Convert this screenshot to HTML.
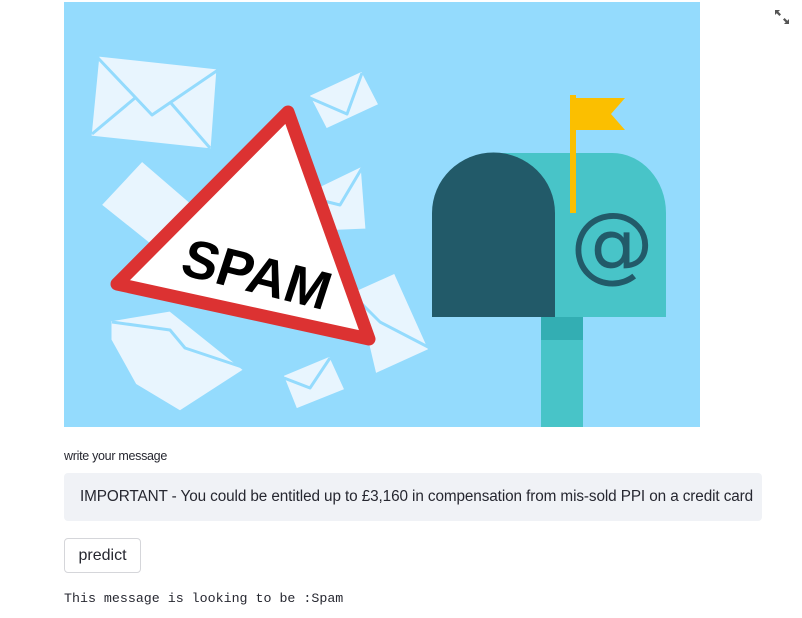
<!DOCTYPE html>
<html><head><meta charset="utf-8"><style>
body{margin:0;width:802px;height:618px;background:#fff;position:relative;overflow:hidden;font-family:"Liberation Sans",sans-serif;color:#262730}
svg.main{position:absolute;left:64px;top:2px}
.lbl{position:absolute;left:64px;top:449px;font-size:12.5px;color:#262730;letter-spacing:-0.3px}
.inp{position:absolute;left:64px;top:473px;width:698px;height:48px;background:#f0f2f6;border-radius:4px;overflow:hidden;white-space:nowrap;font-size:15.3px;line-height:48px;text-indent:16px;color:#262730;letter-spacing:-0.1px}
.btn{position:absolute;left:64px;top:538px;width:77px;height:35px;border:1px solid #d5d6da;border-radius:4px;font-size:16px;line-height:34px;text-align:center;box-sizing:border-box}
.out{position:absolute;left:64px;top:591px;font-family:"Liberation Mono",monospace;font-size:13.3px;color:#262730}
</style></head><body>
<svg class="main" width="636" height="425" viewBox="64 2 636 425">
<rect x="64" y="2" width="636" height="425" fill="#94dbfd"/>
<g fill="#e8f5fe" stroke="#94dbfd" stroke-width="3" stroke-linejoin="round">
<polygon points="98,55 218,68 212,150 90,137"/>
<polyline points="98,58 152,115 218,70" fill="none"/>
<polyline points="92,134 135,98" fill="none"/><polyline points="170,102 210,148" fill="none"/>
<polygon points="308,95 362,70 380,105 326,130"/>
<polyline points="310,98 347,114 362,73" fill="none"/>
<polygon points="100,205 142,160 200,210 150,245"/>
<polygon points="300,195 362,165 367,230 320,232"/>
<polyline points="320,200 340,205 362,168" fill="none"/>
<polygon points="110,320 170,310 245,370 180,412 135,385 110,340"/>
<polyline points="112,322 170,330 185,348 245,368" fill="none"/>
<polygon points="355,290 395,272 430,350 375,375"/>
<polyline points="358,300 380,322 430,348" fill="none"/>
<polygon points="282,375 330,355 346,390 296,410"/>
<polyline points="284,378 310,388 330,358" fill="none"/>
</g>
<polygon points="288,112 117,284 369,339" fill="#fff" stroke="#dc3232" stroke-width="13" stroke-linejoin="round"/>
<text x="0" y="0" transform="translate(251,292) rotate(14) skewX(-4)" text-anchor="middle" font-family="Liberation Sans" font-weight="bold" font-size="54" fill="#000" textLength="150" lengthAdjust="spacingAndGlyphs">SPAM</text>
<path d="M490,153 H612 A54,60 0 0 1 666,213 V317 H490 Z" fill="#48c4c8"/>
<path d="M432,317 V213 A61,60 0 0 1 555,213 V317 Z" fill="#225a69"/>
<rect x="541" y="317" width="42" height="110" fill="#48c4c8"/>
<rect x="541" y="317" width="42" height="23" fill="#33aeb3"/>
<rect x="570" y="95" width="6" height="118" fill="#fbbf00"/>
<polygon points="576,98 625,98 611,114 625,130 576,130" fill="#fbbf00"/>
<text x="612" y="272" text-anchor="middle" font-family="DejaVu Sans" font-size="84" fill="#225a69">@</text>
</svg>
<svg style="position:absolute;left:774px;top:9px" width="16" height="16" viewBox="0 0 16 16" fill="#555">
<path d="M1,1 H6 L4.3,2.7 L7,5.4 L5.4,7 L2.7,4.3 L1,6 Z M15,15 H10 L11.7,13.3 L9,10.6 L10.6,9 L13.3,11.7 L15,10 Z"/>
</svg>
<div class="lbl">write your message</div>
<div class="inp">IMPORTANT - You could be entitled up to £3,160 in compensation from mis-sold PPI on a credit card</div>
<div class="btn">predict</div>
<div class="out">This message is looking to be :Spam</div>
</body></html>
